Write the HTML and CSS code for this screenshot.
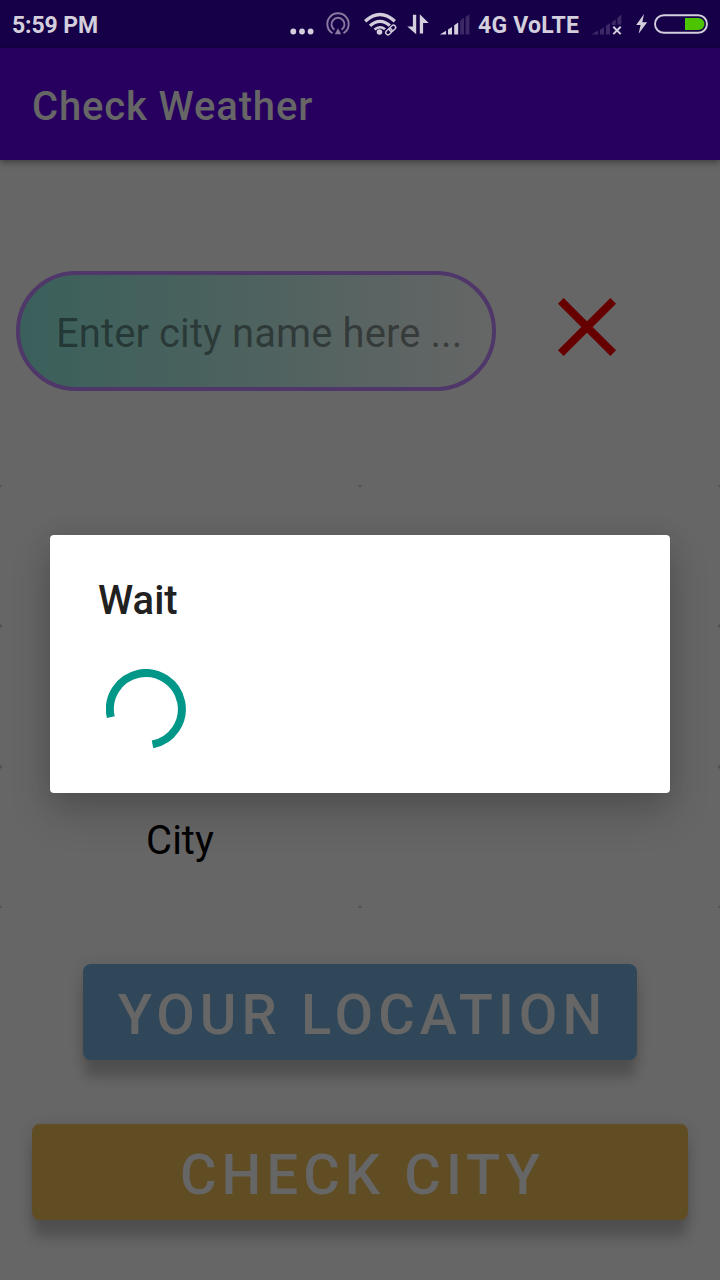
FILE: index.html
```html
<!DOCTYPE html>
<html lang="en">
<head>
<meta charset="utf-8">
<title>Check Weather</title>
<link rel="stylesheet" href="styles.css">
</head>
<body>
<div class="screen">
  <header class="status">
    <span class="clock">5:59 PM</span>
    <svg class="status-icons" width="190" height="48" viewBox="280 0 190 48">
      <g class="light">
        <circle cx="293.3" cy="31.5" r="2.9"/><circle cx="302" cy="31.5" r="2.9"/><circle cx="310.6" cy="31.5" r="2.9"/>
      </g>
      <g class="muted-line" stroke-width="1.9">
        <path d="M332.500 33.200A10.700 10.700 0 1 1 343.500 33.200"/>
        <path d="M334.400 29.700A6.500 6.500 0 1 1 341.600 29.700"/>
      </g>
      <path class="muted" d="M338 28.300l3.200 6h-6.400z"/>
      <g class="line" stroke-width="3.200">
        <path d="M365.200 21.300Q380 7.700 394.800 21.300"/>
        <path d="M370 25.700Q380 16.900 390 25.700"/>
        <path d="M374.500 29.600Q380 25 385 29.300" stroke-width="2.600"/>
      </g>
      <circle class="light" cx="379.500" cy="32" r="2.800"/>
      <g transform="rotate(-43 390.700 30)">
        <rect class="link-gap" x="383.500" y="26.200" width="14.500" height="7.600" rx="3.800"/>
        <g class="line" stroke-width="1.400"><rect x="384.700" y="27.800" width="7" height="4.400" rx="2.200"/><rect x="389.700" y="27.800" width="7" height="4.400" rx="2.200"/></g>
      </g>
      <path class="light" d="M412.900 14.800h3.300v19.400l-8.900-7.800h5.600zM419.800 14.200l8.900 8.700h-5.600v10.700h-3.300z"/>
      <path class="light" d="M439.800 34.500l6.300-3.700v3.700zM448 29.500l4-2.600v7.600h-4zM454.200 25.200l4-2.700v12h-4z"/>
      <path class="faint" d="M460.200 20.500l3.800-2.700v16.700h-3.800zM465.600 17l3.800-2.700v20.200h-3.800z"/>
    </svg>
    <span class="network">4G VoLTE</span>
    <svg class="power-icons" width="130" height="48" viewBox="590 0 130 48">
      <path class="faint" d="M591.500 34.500l6.500-4v4zM600 29.700l4-2.500v7.300h-4zM606 25.700l4-2.700v11.500h-4zM611.800 22l4-2.700v5.700h-4zM617.300 18l4-3.500v10h-4z"/>
      <path class="line" stroke-width="2" d="M613.300 26.700l7.400 7.400M620.700 26.700l-7.400 7.400"/>
      <path class="light" d="M644 14l-7.800 11h4.400l-2 8.800 8.600-11.600h-4.900z"/>
      <rect class="line" x="655" y="15.200" width="52" height="17.600" rx="8.800" stroke-width="1.900"/>
      <path class="charge" d="M685 18h13.500a6 6 0 0 1 0 12H685z"/>
    </svg>
  </header>
  <div class="appbar"><h1 class="title">Check Weather</h1></div>
  <main class="content">
    <div class="search">
      <div class="field"><span class="hint">Enter city name here ...</span></div>
      <svg class="clear" width="60" height="60" viewBox="0 0 60 60"><path d="M3.800 3.800L56.200 56.200M56.200 3.800L3.800 56.200"/></svg>
    </div>
    <section class="cards">
      <div class="card"></div><div class="card"></div>
      <div class="card"></div><div class="card"></div>
      <div class="card">City</div><div class="card"></div>
    </section>
    <div class="actions">
      <div class="button location">YOUR LOCATION</div>
      <div class="button check">CHECK CITY</div>
    </div>
  </main>
  <div class="dialog">
    <h2 class="dialog-title">Wait</h2>
    <svg class="spinner" width="80" height="80" viewBox="0 0 80 80"><path d="M4.800 48.200A36 36 0 1 1 46.500 75.400"/></svg>
  </div>
</div>
</body>
</html>
```
FILE: styles.css
```css
* { box-sizing: border-box; }
body { margin: 0; font-family: Roboto, sans-serif; }
.screen { position: relative; width: 720px; height: 1280px; overflow: hidden; background: #666; display: flex; flex-direction: column; }
h1, h2 { margin: 0; font-weight: 500; }

.status { height: 48px; flex: none; display: flex; align-items: center; background: #160048; color: #d4cfdd; font-weight: 700; font-size: 23px; line-height: 48px; white-space: nowrap; }
.clock { width: 268px; margin-left: 12px; padding-top: 3px; letter-spacing: -.1px; }
.status-icons, .power-icons { flex: none; display: block; }
.network { width: 112px; margin-left: 8px; padding-top: 3px; letter-spacing: .25px; }
.light { fill: #d4cfdd; }
.line { fill: none; stroke: #d4cfdd; }
.muted { fill: #887aa0; }
.muted-line { fill: none; stroke: #887aa0; }
.faint { fill: #3b2864; }
.link-gap { fill: #160048; }
.charge { fill: #4cc500; }

.appbar { height: 112px; flex: none; display: flex; align-items: center; padding: 6px 32px 0; background: #27005f; box-shadow: 0 2px 7px rgba(0, 0, 0, .42); }
.title { font-size: 40px; line-height: 48px; letter-spacing: .85px; color: #666; white-space: nowrap; }

.content { flex: 1; display: flex; flex-direction: column; padding-top: 111px; }
.search { display: flex; align-items: flex-start; height: 214px; padding-left: 16px; }
.field { width: 480px; height: 120px; display: flex; align-items: center; padding: 6px 0 0 36px; border: 4px solid #4f3769; border-radius: 60px; background: linear-gradient(90deg, #3a605b, #4e625f 50%, #666) border-box; }
.hint { font-size: 40px; line-height: 48px; letter-spacing: .08px; color: rgba(0, 0, 0, .42); white-space: nowrap; }
.clear { margin: 26px 0 0 61px; fill: none; stroke: #660000; stroke-width: 8px; }

.cards { height: 423px; flex: none; display: grid; grid-template: repeat(3, 141px) / 360px 360px; background: #505050; }
.card { display: flex; align-items: center; justify-content: center; padding-top: 6px; border-radius: 4px; background: #666; color: #000; font-size: 40px; line-height: 48px; }

.actions { display: flex; flex-direction: column; align-items: center; gap: 64px; padding-top: 56px; }
.button { height: 96px; display: flex; align-items: center; justify-content: center; padding: 5px 0 0 5px; border-radius: 8px; color: #666; font-size: 56px; font-weight: 500; letter-spacing: 5.100px; white-space: nowrap; box-shadow: 0 19px 12px -1px rgba(0, 0, 0, .19), 0 2px 16px rgba(0, 0, 0, .12); }
.location { width: 554px; background: #30475a; }
.check { width: 656px; background: #614d23; }

.dialog { position: absolute; left: 50px; top: 535px; width: 620px; height: 258px; padding: 42px 48px; border-radius: 4px; background: #fff; box-shadow: 0 20px 40px rgba(0, 0, 0, .19), 0 2px 26px rgba(0, 0, 0, .1); }
.dialog-title { font-size: 40px; line-height: 48px; color: #212121; }
.spinner { display: block; margin: 44px 0 0 8px; fill: none; stroke: #009688; stroke-width: 8px; }
```
